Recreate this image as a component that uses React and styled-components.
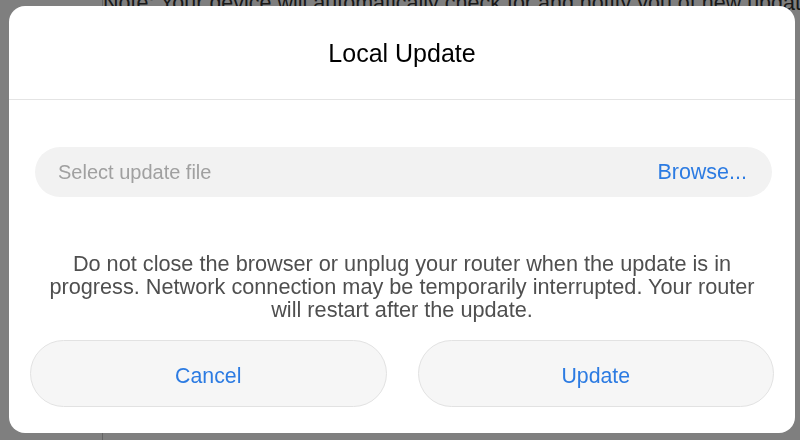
import React from "react";
import styled, { createGlobalStyle } from "styled-components";

const GlobalStyle = createGlobalStyle`
  html, body {
    margin: 0;
    padding: 0;
    width: 800px;
    height: 440px;
    overflow: hidden;
    font-family: "Liberation Sans", Arial, Helvetica, sans-serif;
  }
`;

function App() {
  return (
    <>
      <GlobalStyle />
      <Page>
        <Sidebar />
        <Content>
          <Note>
            Note: Your device will automatically check for and notify you of new
            updates.
          </Note>
        </Content>
      </Page>
      <Overlay>
        <Dialog>
          <Header>
            <Title>Local Update</Title>
          </Header>
          <Body>
            <FilePicker>
              <Placeholder>Select update file</Placeholder>
              <LinkText>Browse...</LinkText>
            </FilePicker>
            <Warning>
              Do not close the browser or unplug your router when the update is in
              <br />
              progress. Network connection may be temporarily interrupted. Your router
              <br />
              will restart after the update.
            </Warning>
            <ButtonRow>
              <PillButton>Cancel</PillButton>
              <PillButton>Update</PillButton>
            </ButtonRow>
          </Body>
        </Dialog>
      </Overlay>
    </>
  );
}

const Page = styled.div`
  width: 800px;
  height: 440px;
  display: flex;
  background: #ffffff;
`;

const Sidebar = styled.div`
  width: 102px;
  flex-shrink: 0;
  border-right: 1px solid #c8c8c8;
`;

const Content = styled.div`
  flex: 1;
  overflow: hidden;
`;

const Note = styled.p`
  margin: -9px 0 0 0;
  font-size: 21.5px;
  line-height: 24px;
  color: #333;
  white-space: nowrap;
`;

const Overlay = styled.div`
  position: fixed;
  inset: 0;
  background: rgba(0, 0, 0, 0.5);
  padding: 6px 0 0 9px;
  box-sizing: border-box;
`;

const Dialog = styled.div`
  width: 786px;
  height: 427px;
  background: #ffffff;
  border-radius: 16px;
  display: flex;
  flex-direction: column;
  overflow: hidden;
`;

const Header = styled.div`
  height: 94px;
  padding-top: 2px;
  box-sizing: border-box;
  display: flex;
  align-items: center;
  justify-content: center;
  border-bottom: 1px solid #e4e4e4;
`;

const Title = styled.h2`
  margin: 0;
  font-size: 25px;
  font-weight: normal;
  color: #000;
`;

const Body = styled.div`
  padding: 47px 21px 26px 21px;
  display: flex;
  flex-direction: column;
`;

const FilePicker = styled.div`
  margin: 0 2px 0 5px;
  height: 49px;
  border-radius: 25px;
  background: #f2f2f2;
  display: flex;
  align-items: center;
  justify-content: space-between;
  padding: 1px 25px 0 23px;
  font-size: 20px;
`;

const Placeholder = styled.span`
  color: #a0a0a0;
`;

const LinkText = styled.span`
  color: #2c7be2;
  font-size: 21.5px;
`;

const Warning = styled.p`
  margin: 55px 0 0 0;
  text-align: center;
  font-size: 21.7px;
  line-height: 23px;
  color: #4f4f4f;
  white-space: nowrap;
`;

const ButtonRow = styled.div`
  margin-top: 19px;
  display: flex;
  gap: 31px;
`;

const PillButton = styled.button`
  flex: 1;
  height: 67px;
  padding: 5px 0 0 0;
  border-radius: 34px;
  border: 1px solid #e2e2e2;
  background: #f6f6f6;
  color: #2c7be2;
  font-family: inherit;
  font-size: 21.3px;
  cursor: pointer;
`;

export default App;
